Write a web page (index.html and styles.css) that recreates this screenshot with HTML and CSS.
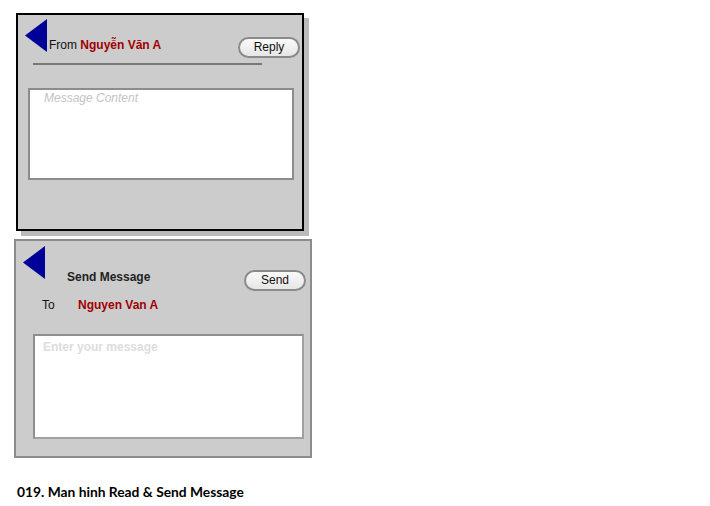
FILE: index.html
```html
<!DOCTYPE html>
<html>
<head>
<meta charset="utf-8">
<link rel="stylesheet" href="styles.css">
</head>
<body>
<div class="page">
  <section class="panel panel-read">
    <div class="head">
      <svg class="back" width="22" height="33" viewBox="0 0 22 33"><polygon points="22,0 22,33 0,16.5" fill="#000099"/></svg>
      <div class="from">From <span class="name">Nguyễn Văn A</span></div>
      <div class="btn btn-reply">Reply</div>
    </div>
    <div class="rule"></div>
    <div class="box box-read"><span class="ph-italic">Message Content</span></div>
  </section>

  <section class="panel panel-send">
    <div class="head">
      <svg class="back" width="22" height="33" viewBox="0 0 22 33"><polygon points="22,0 22,33 0,16.5" fill="#000099"/></svg>
      <div class="title">Send Message</div>
      <div class="btn btn-send">Send</div>
    </div>
    <div class="to-row"><span class="to">To</span><span class="name">Nguyen Van A</span></div>
    <div class="box box-send"><span class="ph-bold">Enter your message</span></div>
  </section>

  <p class="caption">019. Man hinh Read &amp; Send Message</p>
</div>
</body>
</html>
```

FILE: styles.css
```css
html, body {
  margin: 0;
  padding: 0;
  background: #ffffff;
}

.page {
  padding: 13px 0 0 14px;
  font-family: "Liberation Sans", Arial, sans-serif;
  font-size: 12px;
  color: #111;
}

.panel {
  box-sizing: border-box;
  background: #cccccc;
}

.panel-read {
  width: 288px;
  height: 218px;
  margin-left: 2px;
  border: 2px solid #000;
  box-shadow: 5px 5px 0 #bbbbbb;
}

.panel-send {
  width: 298px;
  height: 219px;
  margin-top: 8px;
  border: 2px solid #8c8c8c;
}

.head {
  display: flex;
  align-items: flex-start;
}

.panel-read .head {
  padding: 4px 2px 0 7px;
}

.panel-send .head {
  padding: 5px 4px 0 7px;
}

.back {
  display: block;
  flex: none;
}

.from {
  margin-top: 19px;
  margin-left: 2px;
  line-height: 14px;
  white-space: nowrap;
}

.name {
  color: #a00000;
  font-weight: bold;
}

.title {
  margin-top: 24px;
  margin-left: 22px;
  line-height: 14px;
  font-weight: bold;
  color: #222;
}

.btn {
  box-sizing: border-box;
  margin-left: auto;
  width: 62px;
  height: 21px;
  border: 2px solid #8a8a8a;
  border-radius: 11px;
  background: linear-gradient(#fafafa, #e6e6e6);
  text-align: center;
  line-height: 17px;
  color: #111;
}

.btn-reply {
  margin-top: 18px;
}

.btn-send {
  margin-top: 24px;
}

.rule {
  width: 229px;
  height: 2px;
  margin: 5px 0 0 15px;
  background: #777;
}

.box {
  box-sizing: border-box;
  background: #fff;
  border: 2px solid #8c8c8c;
}

.box-read {
  width: 266px;
  height: 92px;
  margin: 23px 0 0 10px;
  padding: 1px 0 0 14px;
}

.ph-italic {
  font-style: italic;
  color: #c4c4c4;
  line-height: 14px;
}

.to-row {
  display: grid;
  grid-template-columns: 36px auto;
  justify-content: start;
  margin: 7px 0 0 26px;
  line-height: 14px;
}

.to {
  color: #111;
}

.box-send {
  width: 271px;
  height: 105px;
  margin: 22px 0 0 17px;
  padding: 4px 0 0 8px;
  border-color: #8f8f8f #a0a0a0 #a0a0a0 #8f8f8f;
}

.ph-bold {
  font-weight: bold;
  color: #dddddd;
  line-height: 14px;
}

.caption {
  margin: 26px 0 0 3px;
  font-family: Lato, "Open Sans", sans-serif;
  font-weight: bold;
  font-size: 13.8px;
  line-height: 16px;
  color: #000;
}
```
